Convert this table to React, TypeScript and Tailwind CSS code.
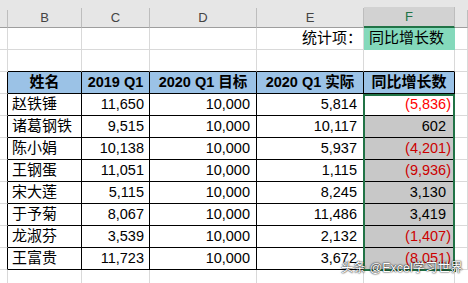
const ROWS = [
  { name: "赵铁锤", q19: "11,650", goal: "10,000", real: "5,814", diff: "(5,836)", neg: true },
  { name: "诸葛钢铁", q19: "9,515", goal: "10,000", real: "10,117", diff: "602", neg: false },
  { name: "陈小娟", q19: "10,138", goal: "10,000", real: "5,937", diff: "(4,201)", neg: true },
  { name: "王钢蛋", q19: "11,051", goal: "10,000", real: "1,115", diff: "(9,936)", neg: true },
  { name: "宋大莲", q19: "5,115", goal: "10,000", real: "8,245", diff: "3,130", neg: false },
  { name: "于予菊", q19: "8,067", goal: "10,000", real: "11,486", diff: "3,419", neg: false },
  { name: "龙淑芬", q19: "3,539", goal: "10,000", real: "2,132", diff: "(1,407)", neg: true },
  { name: "王富贵", q19: "11,723", goal: "10,000", real: "3,672", diff: "(8,051)", neg: true },
];

const grid = "border-r border-b border-[#d9d9d9]";
const cell = "border-r border-b border-black";

function ColHead({ w, label, active }: { w: string; label?: string; active?: boolean }) {
  return (
    <div className={`${w} flex h-[28px] flex-col`}>
      <div className="h-[10px]" />
      <div
        className={`flex flex-1 items-center justify-center border-r border-[#bdbdbd] ${
          active ? "border-b-2 border-b-[#217346] bg-[#d2d2d2] text-[#217346]" : "border-b border-b-[#9e9e9e] text-[#444]"
        }`}
      >
        {label}
      </div>
    </div>
  );
}

export default function App() {
  return (
    <div className="relative h-[283px] w-[468px] overflow-hidden bg-white text-[14.5px] text-black [font-family:'Liberation_Sans','Noto_Sans_CJK_SC',sans-serif]">
      {/* column letters */}
      <div className="flex bg-[#e6e6e6] text-[13px]">
        <ColHead w="w-[8px]" />
        <ColHead w="w-[74px]" label="B" />
        <ColHead w="w-[68px]" label="C" />
        <ColHead w="w-[107px]" label="D" />
        <ColHead w="w-[107px]" label="E" />
        <ColHead w="w-[91px]" label="F" active />
        <ColHead w="w-[13px]" />
      </div>

      {/* row 2: 统计项 */}
      <div className="flex h-[22px]">
        <div className={`w-[8px] ${grid}`} />
        <div className={`w-[74px] ${grid}`} />
        <div className={`w-[68px] ${grid}`} />
        <div className={`w-[107px] ${grid}`} />
        <div className={`flex w-[107px] items-center justify-end pr-[1px] text-[15px] ${grid}`}>统计项：</div>
        <div className="flex w-[91px] items-center border-b border-[#84d9bb] bg-[#84d9bb] pl-[5px] text-[15px]">同比增长数</div>
        <div className={`w-[13px] ${grid}`} />
      </div>

      {/* row 3: empty, top edge of table */}
      <div className="flex h-[22px]">
        <div className={`w-[8px] ${grid}`} />
        <div className="w-[74px] border-r border-b border-r-[#d9d9d9] border-b-black" />
        <div className="w-[68px] border-r border-b border-r-[#d9d9d9] border-b-black" />
        <div className="w-[107px] border-r border-b border-r-[#d9d9d9] border-b-black" />
        <div className="w-[107px] border-r border-b border-r-[#d9d9d9] border-b-black" />
        <div className="w-[91px] border-r border-b border-r-[#d9d9d9] border-b-black" />
        <div className={`w-[13px] ${grid}`} />
      </div>

      {/* table header */}
      <div className="flex h-[22px] font-bold">
        <div className="w-[8px] border-r border-b border-r-black border-b-[#d9d9d9]" />
        <div className={`flex w-[74px] items-center justify-center bg-[#9bc2e6] text-[15px] ${cell}`}>姓名</div>
        <div className={`flex w-[68px] items-center justify-center bg-[#9bc2e6] ${cell}`}>2019 Q1</div>
        <div className={`flex w-[107px] items-center justify-center bg-[#9bc2e6] ${cell}`}>2020 Q1 目标</div>
        <div className={`flex w-[107px] items-center justify-center bg-[#9bc2e6] ${cell}`}>2020 Q1 实际</div>
        <div className={`flex w-[91px] items-center justify-center bg-[#9bc2e6] text-[15px] ${cell}`}>同比增长数</div>
        <div className={`w-[13px] ${grid}`} />
      </div>

      {ROWS.map((r, i) => (
        <div key={r.name} className="flex h-[22px]">
          <div className="w-[8px] border-r border-b border-r-black border-b-[#d9d9d9]" />
          <div className={`flex w-[74px] items-center pl-[4px] text-[15px] ${cell}`}>{r.name}</div>
          <div className={`flex w-[68px] items-center justify-end pr-[5px] ${cell}`}>{r.q19}</div>
          <div className={`flex w-[107px] items-center justify-end pr-[6px] ${cell}`}>{r.goal}</div>
          <div className={`flex w-[107px] items-center justify-end pr-[6px] ${cell}`}>{r.real}</div>
          <div
            className={`flex w-[91px] items-center justify-end ${cell} ${i === 0 ? "bg-white" : "bg-[#c8c8c8]"} ${
              r.neg ? (i === 0 ? "pr-[3px] text-[#ff0000]" : "pr-[3px] text-[#cc0000]") : "pr-[8px]"
            }`}
          >
            {r.diff}
          </div>
          <div className={`w-[13px] ${grid}`} />
        </div>
      ))}

      <div className="flex h-[13px]">
        <div className="w-[8px] border-r border-[#d9d9d9]" />
        <div className="w-[74px] border-r border-[#d9d9d9]" />
        <div className="w-[68px] border-r border-[#d9d9d9]" />
        <div className="w-[107px] border-r border-[#d9d9d9]" />
        <div className="w-[107px] border-r border-[#d9d9d9]" />
        <div className="w-[91px] border-r border-[#d9d9d9]" />
        <div className="w-[13px]" />
      </div>

      {/* selection F4:F11 */}
      <div className="pointer-events-none absolute top-[94px] left-[363px] h-[177px] w-[92px] border-2 border-[#217346]" />
      <div className="absolute top-[268px] left-[452px] h-[5px] w-[5px] border border-white bg-[#217346]" />

      {/* watermark */}
      <div className="absolute top-[259px] left-[341px] whitespace-nowrap text-[12.5px] text-white [text-shadow:0_0_2px_rgba(0,0,0,0.9),0_0_1px_rgba(0,0,0,0.9)]">
        头条 @Excel学习世界
      </div>
    </div>
  );
}
